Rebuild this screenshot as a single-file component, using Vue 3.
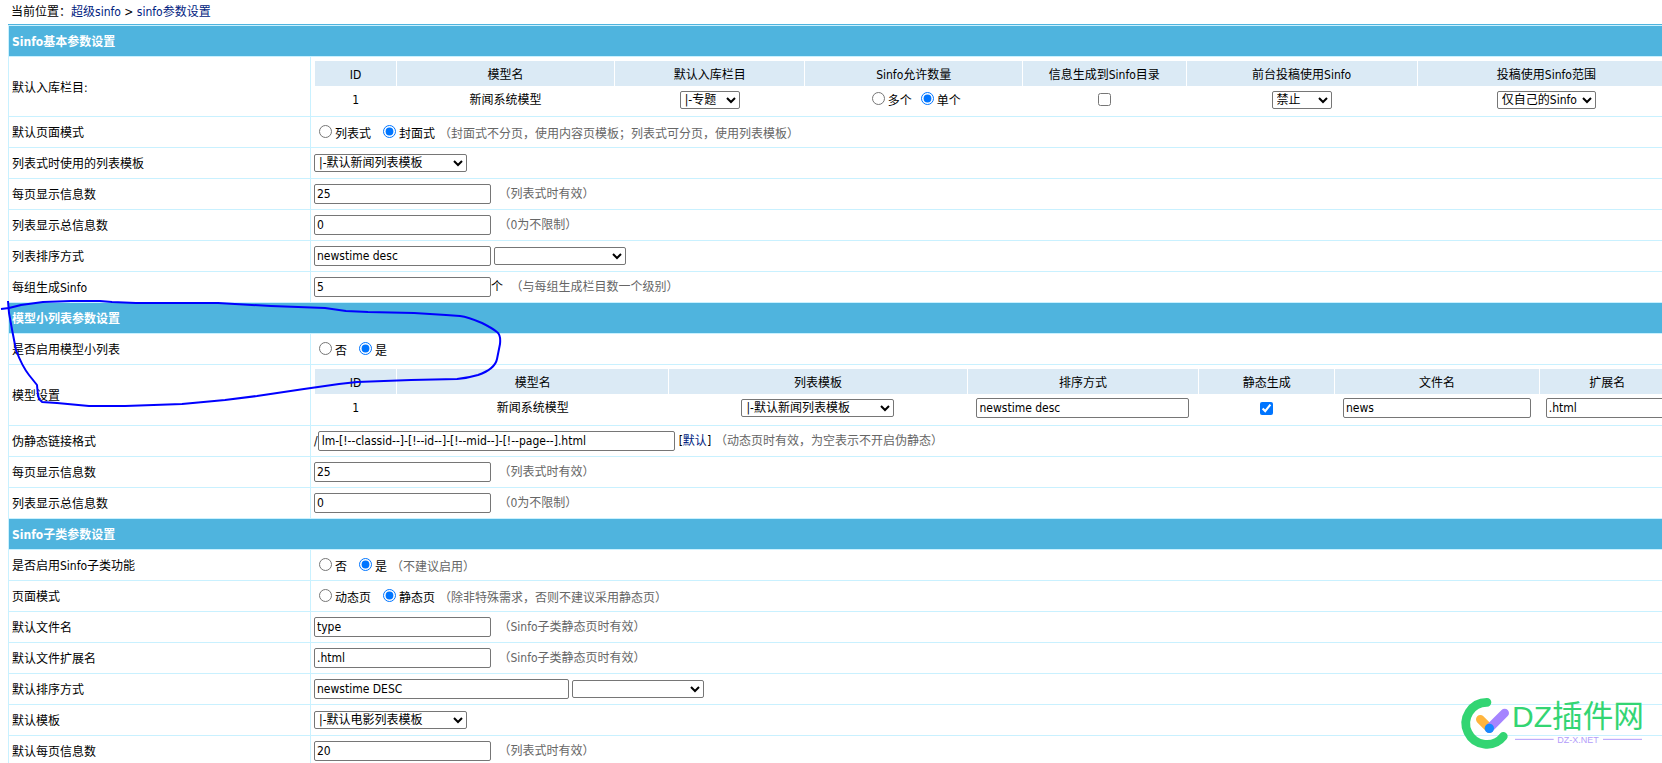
<script setup>
import { reactive } from 'vue'

const sections = reactive([
  {
    title: 'Sinfo基本参数设置',
    rows: [
      { id: 'column', label: '默认入库栏目:', kind: 'models' },
      {
        id: 'pagemode', label: '默认页面模式', kind: 'radio', value: '封面式',
        options: ['列表式', '封面式'],
        hint: '（封面式不分页，使用内容页模板；列表式可分页，使用列表模板）',
      },
      { id: 'listtemp', label: '列表式时使用的列表模板', kind: 'template', value: '|-默认新闻列表模板' },
      { id: 'lencord', label: '每页显示信息数', kind: 'text', value: '25', hint: '（列表式时有效）' },
      { id: 'maxnum', label: '列表显示总信息数', kind: 'text', value: '0', hint: '（0为不限制）' },
      { id: 'order', label: '列表排序方式', kind: 'order', value: 'newstime desc' },
      { id: 'group', label: '每组生成Sinfo', kind: 'text', value: '5', unit: '个', hint: '（与每组生成栏目数一个级别）' },
    ],
  },
  {
    title: '模型小列表参数设置',
    rows: [
      { id: 'smalllist', label: '是否启用模型小列表', kind: 'radio', value: '是', options: ['否', '是'] },
      { id: 'modelset', label: '模型设置', kind: 'settings' },
      { id: 'rewrite', label: '伪静态链接格式', kind: 'rewrite', value: 'lm-[!--classid--]-[!--id--]-[!--mid--]-[!--page--].html', hint: '（动态页时有效，为空表示不开启伪静态）' },
      { id: 'sm-lencord', label: '每页显示信息数', kind: 'text', value: '25', hint: '（列表式时有效）' },
      { id: 'sm-maxnum', label: '列表显示总信息数', kind: 'text', value: '0', hint: '（0为不限制）' },
    ],
  },
  {
    title: 'Sinfo子类参数设置',
    rows: [
      { id: 'sub', label: '是否启用Sinfo子类功能', kind: 'radio', value: '是', options: ['否', '是'], hint: '（不建议启用）' },
      { id: 'submode', label: '页面模式', kind: 'radio', value: '静态页', options: ['动态页', '静态页'], hint: '（除非特殊需求，否则不建议采用静态页）' },
      { id: 'subfile', label: '默认文件名', kind: 'text', value: 'type', hint: '（Sinfo子类静态页时有效）' },
      { id: 'subext', label: '默认文件扩展名', kind: 'text', value: '.html', hint: '（Sinfo子类静态页时有效）' },
      { id: 'suborder', label: '默认排序方式', kind: 'order', wide: true, value: 'newstime DESC' },
      { id: 'subtemp', label: '默认模板', kind: 'template', value: '|-默认电影列表模板' },
      { id: 'subnum', label: '默认每页信息数', kind: 'text', value: '20', hint: '（列表式时有效）' },
    ],
  },
])

const model = reactive({
  amount: '单个', toDir: false,
  order: 'newstime desc', isStatic: true, file: 'news', ext: '.html',
})
</script>

<template>
  <div class="page">
    <nav class="crumbs">当前位置：<a href="#">超级sinfo</a>&nbsp;&gt;&nbsp;<a href="#">sinfo参数设置</a></nav>

    <form @submit.prevent>
      <table class="form-table">
        <colgroup>
          <col class="label-col">
          <col>
        </colgroup>
        <tbody v-for="section in sections" :key="section.title">
          <tr class="section-row">
            <th colspan="2" scope="colgroup">{{ section.title }}</th>
          </tr>
          <tr v-for="row in section.rows" :key="row.id">
            <td class="label-cell"><label :for="row.id">{{ row.label }}</label></td>

            <td v-if="row.kind === 'models'">
              <table class="grid">
                <colgroup>
                  <col class="w6"><col class="w16"><col class="w14"><col class="w16"><col class="w12"><col class="w17"><col class="w19">
                </colgroup>
                <thead>
                  <tr>
                    <th>ID</th><th>模型名</th><th>默认入库栏目</th><th>Sinfo允许数量</th>
                    <th>信息生成到Sinfo目录</th><th>前台投稿使用Sinfo</th><th>投稿使用Sinfo范围</th>
                  </tr>
                </thead>
                <tbody>
                  <tr>
                    <td>1</td>
                    <td>新闻系统模型</td>
                    <td><select :id="row.id" class="sel-short"><option>|-专题</option></select></td>
                    <td>
                      <label><input v-model="model.amount" type="radio" name="amount" value="多个">多个</label>
                      <label class="near"><input v-model="model.amount" type="radio" name="amount" value="单个">单个</label>
                    </td>
                    <td><input v-model="model.toDir" type="checkbox" aria-label="信息生成到Sinfo目录"></td>
                    <td><select class="sel-short" aria-label="前台投稿使用Sinfo"><option>禁止</option></select></td>
                    <td><select class="sel-scope" aria-label="投稿使用Sinfo范围"><option>仅自己的Sinfo</option></select></td>
                  </tr>
                </tbody>
              </table>
            </td>

            <td v-else-if="row.kind === 'settings'">
              <table class="grid settings">
                <colgroup>
                  <col class="w6"><col class="w20"><col class="w22"><col class="w17"><col class="w10"><col class="w15"><col class="w10">
                </colgroup>
                <thead>
                  <tr>
                    <th>ID</th><th>模型名</th><th>列表模板</th><th>排序方式</th>
                    <th>静态生成</th><th>文件名</th><th>扩展名</th>
                  </tr>
                </thead>
                <tbody>
                  <tr>
                    <td>1</td>
                    <td>新闻系统模型</td>
                    <td><select :id="row.id" class="sel-template"><option>|-默认新闻列表模板</option></select></td>
                    <td><input v-model="model.order" class="in-order" type="text" aria-label="排序方式"></td>
                    <td><input v-model="model.isStatic" type="checkbox" aria-label="静态生成"></td>
                    <td><input v-model="model.file" class="in-file" type="text" aria-label="文件名"></td>
                    <td><input v-model="model.ext" class="in-ext" type="text" aria-label="扩展名"></td>
                  </tr>
                </tbody>
              </table>
            </td>

            <td v-else-if="row.kind === 'radio'" class="line">
              <label v-for="(option, i) in row.options" :key="option" :class="{ next: i > 0 }"><input
                :id="i === 0 ? row.id : undefined" v-model="row.value" type="radio" :name="row.id" :value="option">{{ option }}</label>
              <span v-if="row.hint" class="hint">{{ row.hint }}</span>
            </td>

            <td v-else-if="row.kind === 'template'" class="line">
              <select :id="row.id" class="sel-template"><option>{{ row.value }}</option></select>
            </td>

            <td v-else-if="row.kind === 'order'" class="line">
              <input :id="row.id" v-model="row.value" type="text" :class="row.wide ? 'in-wide' : 'in-base'">
              <select class="sel-order" :aria-label="row.label"><option></option></select>
            </td>

            <td v-else-if="row.kind === 'rewrite'" class="line">
              /<input :id="row.id" v-model="row.value" class="in-rewrite" type="text">
              <span class="default">[<a href="#">默认</a>]</span>
              <span class="hint">{{ row.hint }}</span>
            </td>

            <td v-else class="line">
              <input :id="row.id" v-model="row.value" class="in-base" type="text">{{ row.unit }}
              <span class="hint">{{ row.hint }}</span>
            </td>
          </tr>
        </tbody>
      </table>
    </form>

    <svg class="scribble" width="510" height="420" viewBox="0 0 510 420" aria-hidden="true">
      <path
        d="M1 309 L9 308 L21 305 L43 302 L71 301 L100 301 L112 302 L136 303 L218 303 L271 306 L325 308 L346 311 L368 312 L414 313 L446 315 L460 316 Q468 317 482 323 Q492 328 497 332 Q501 335 500 344 L497 359 Q495 369 478 375 Q468 378 457 379 L411 380 L357 382 L339 384 L318 387 L304 389 L257 396 L225 400 L182 404 L125 406 L89 406 L57 403 L42 402 Q39 400 38 396 L37 385 L29 375 Q22 366 16 350 Q12 330 9 313 L8 301" />
    </svg>

    <svg class="watermark" width="222" height="83" viewBox="0 0 666 249" role="img" aria-label="DZ插件网">
      <path class="ring" d="M141 67 A63 63 0 1 0 190 169" />
      <path class="tick-left" d="M121 118 L148 145" />
      <path class="tick-right" d="M148 145 L194 99" />
      <circle class="tick-dot" cx="148" cy="145" r="14" />
      <text class="brand" x="216" y="142">DZ<tspan class="brand-cn">插件网</tspan></text>
      <path class="rule" d="M225 178 H341 M489 178 H606" />
      <text class="site" x="414" y="188" text-anchor="middle">DZ-X.NET</text>
    </svg>
  </div>
</template>

<style>
html {
  overflow: hidden;
}
</style>

<style scoped>
.page {
  position: relative;
  height: 100vh;
  box-sizing: border-box;
  padding-left: 8px;
  overflow: hidden;
  background: #fff;
  color: #000;
  font: 12px/18px "DejaVu Sans Condensed", "Noto Sans CJK SC", sans-serif;
}

a {
  color: #002280;
  text-decoration: none;
}

.crumbs {
  padding: 3px 3px;
  border-bottom: 1px solid #4fb4de;
}

form {
  margin-right: -18px;
}

.form-table {
  width: 100%;
  border-spacing: 1px;
  table-layout: fixed;
  background: #c9f1ff;
}

.label-col {
  width: 301px;
}

.form-table > tbody > tr > td {
  height: 30px;
  box-sizing: border-box;
  padding: 3px;
  background: #fff;
  vertical-align: middle;
}

.form-table > tbody > tr > .label-cell {
  padding: 4px 3px 2px;
}

.section-row > th {
  height: 30px;
  box-sizing: border-box;
  padding: 4px 3px 2px;
  background: #4fb4de;
  color: #fff;
  text-align: left;
}

.line {
  white-space: nowrap;
}

.grid {
  width: 100%;
  border-spacing: 1px;
  table-layout: fixed;
  text-align: center;
}

.grid th {
  height: 25px;
  box-sizing: border-box;
  padding: 2px 0 0;
  background: #dbeaf5;
  font-weight: normal;
}

.grid td {
  height: 25px;
  padding: 0;
  white-space: nowrap;
}

.settings td {
  height: 26px;
}

.w6 { width: 6%; }
.w10 { width: 10%; }
.w12 { width: 12%; }
.w14 { width: 14%; }
.w15 { width: 15%; }
.w16 { width: 16%; }
.w17 { width: 17%; }
.w19 { width: 19%; }
.w20 { width: 20%; }
.w22 { width: 22%; }

input[type="text"],
select {
  box-sizing: border-box;
  margin: 0;
  border: 1px solid #767676;
  border-radius: 2px;
  background: #fff;
  color: #000;
  font: inherit;
  vertical-align: middle;
}

input[type="text"] {
  height: 20px;
  padding: 1px 2px;
}

select {
  height: 18px;
  padding: 0;
  line-height: 16px;
}

input[type="radio"],
input[type="checkbox"] {
  width: 13px;
  height: 13px;
}

input[type="radio"] {
  margin: 3px 3px 0 5px;
}

input[type="checkbox"] {
  margin: 3px;
  vertical-align: middle;
}

.near {
  margin-left: 4px;
}

.next {
  margin-left: 7px;
}

.in-base { width: 177px; }
.in-wide { width: 255px; }

.form-table .in-rewrite {
  width: 357px;
  padding: 1px 3px;
}

.in-order { width: 213px; }
.in-file { width: 188px; }
.in-ext { width: 123px; }
.sel-short { width: 60px; }
.sel-scope { width: 99px; }
.sel-template { width: 153px; }

.sel-order {
  width: 132px;
  margin-left: 3px;
}

.default {
  margin-left: 4px;
}

.hint {
  margin-left: 4px;
  color: #666;
}

.scribble {
  position: absolute;
  top: 0;
  left: 0;
  pointer-events: none;
}

.scribble path {
  fill: none;
  stroke: #00f;
  stroke-width: 2;
  stroke-linejoin: round;
}

.watermark {
  position: absolute;
  right: 0;
  bottom: 0;
  pointer-events: none;
}

.watermark path {
  fill: none;
  stroke-linecap: round;
  stroke-width: 26;
}

.watermark .ring { stroke: #33d573; }
.watermark .tick-left { stroke: #ffb53e; }
.watermark .tick-right { stroke: #a584ff; }
.watermark .tick-dot { fill: #1688ff; }

.watermark .rule {
  stroke: #b39dfa;
  stroke-width: 3;
  stroke-linecap: butt;
}

.brand {
  fill: #33d573;
  font-family: "Liberation Sans", sans-serif;
  font-size: 90px;
}

.brand-cn {
  font-family: "Noto Sans CJK SC", sans-serif;
  font-weight: 400;
  font-size: 92px;
}

.site {
  fill: #b39dfa;
  font-family: "Liberation Sans", sans-serif;
  font-size: 27px;
}
</style>
